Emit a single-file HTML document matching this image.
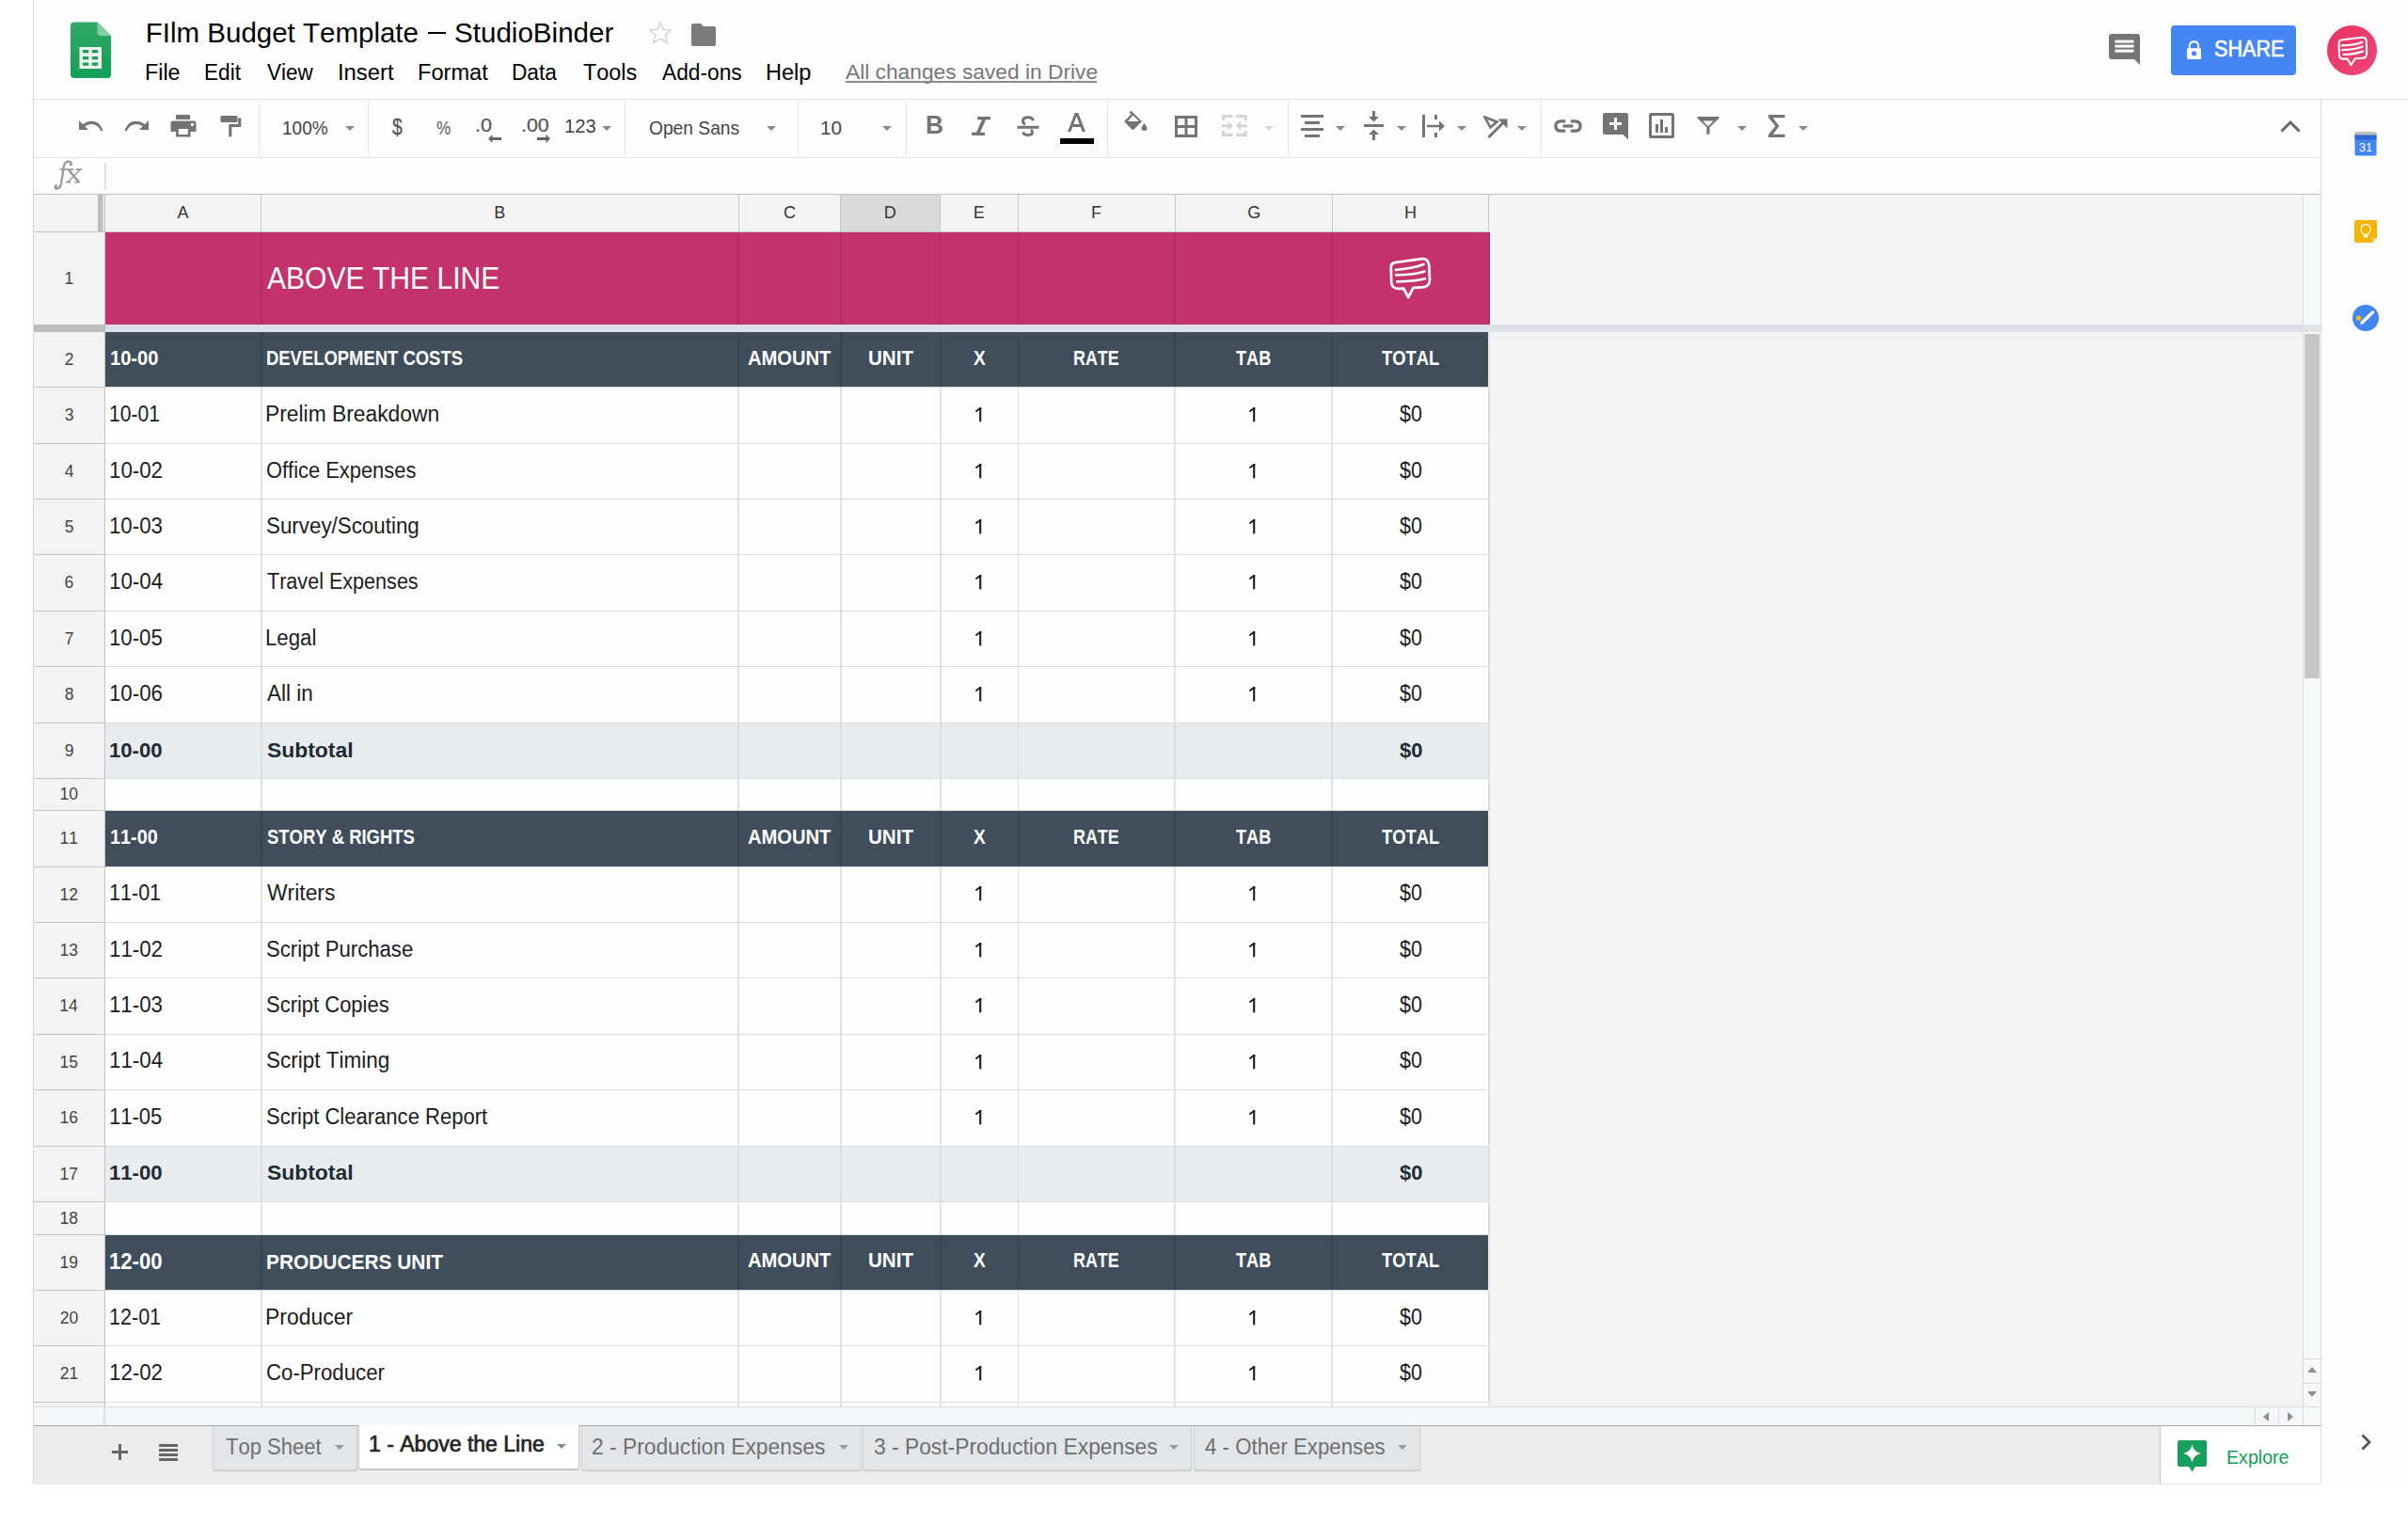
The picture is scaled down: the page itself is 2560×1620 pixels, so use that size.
<!DOCTYPE html>
<html><head><meta charset="utf-8"><title>FIlm Budget Template - StudioBinder</title>
<style>
html,body{margin:0;padding:0;}
body{width:2560px;height:1620px;overflow:hidden;position:relative;background:#fff;font-family:"Liberation Sans",sans-serif;}
.r{position:absolute;display:block;}
.t{position:absolute;white-space:nowrap;line-height:1;transform-origin:0 0;font-kerning:none;}
</style></head><body>
<div class="r" style="left:36px;top:0px;width:2524px;height:105px;background:#fdfdfd;"></div>
<div class="r" style="left:35px;top:0px;width:1px;height:1577px;background:#d6d6d6;"></div>
<div class="r" style="left:36px;top:105px;width:2524px;height:1px;background:#e2e5e3;"></div>
<svg class="r" style="left:74px;top:23px" width="45" height="61" viewBox="0 0 45 61">
<defs><linearGradient id="lg" x1="0" y1="0" x2="0" y2="1"><stop offset="0" stop-color="#34a868"/><stop offset="1" stop-color="#10a057"/></linearGradient></defs>
<path d="M5 0.5 H29.5 L44 15 V56 Q44 60 40 60 H5 Q1 60 1 56 V4.5 Q1 0.5 5 0.5Z" fill="url(#lg)"/>
<path d="M29.5 0.5 L44 15 H33.5 Q29.5 15 29.5 11Z" fill="#87cea4"/>
<rect x="10.5" y="27" width="23.5" height="23" fill="#f1f1f1"/>
<rect x="14" y="30" width="6.2" height="3.3" fill="#16a05c"/><rect x="23.8" y="30" width="6.3" height="3.3" fill="#16a05c"/>
<rect x="14" y="37" width="6.2" height="3.3" fill="#16a05c"/><rect x="23.8" y="37" width="6.3" height="3.3" fill="#16a05c"/>
<rect x="14" y="43.5" width="6.2" height="3.3" fill="#16a05c"/><rect x="23.8" y="43.5" width="6.3" height="3.3" fill="#16a05c"/>
</svg>
<div class="t " style="left:154.78px;top:20.12px;font-size:29.5px;font-weight:normal;color:#000;">FIlm Budget Template</div>
<div class="r" style="left:454.5px;top:33.6px;width:19.5px;height:2.4px;background:#000;"></div>
<div class="t " style="left:482.96px;top:20.12px;font-size:29.5px;font-weight:normal;color:#000;transform:scaleX(1.0025);">StudioBinder</div>
<svg class="r" style="left:688px;top:21px" width="28" height="28" viewBox="0 0 24 24"><path d="M12 2.6l2.8 6.3 6.9.6-5.2 4.6 1.6 6.8L12 17.3l-6.1 3.6 1.6-6.8L2.3 9.5l6.9-.6z" fill="none" stroke="#cfcfcf" stroke-width="1.1"/></svg>
<svg class="r" style="left:735px;top:25px" width="26" height="24" viewBox="0 0 26 24"><path d="M2 0 H10 L13 3 H24 Q26 3 26 5 V22 Q26 24 24 24 H2 Q0 24 0 22 V2 Q0 0 2 0Z" fill="#7b7b7b"/></svg>
<div class="t " style="left:154.19px;top:66.33px;font-size:23px;font-weight:normal;color:#000;transform:scaleX(1.0131);">File</div>
<div class="t " style="left:217.14px;top:66.33px;font-size:23px;font-weight:normal;color:#000;transform:scaleX(0.9846);">Edit</div>
<div class="t " style="left:283.60px;top:66.33px;font-size:23px;font-weight:normal;color:#000;transform:scaleX(0.9778);">View</div>
<div class="t " style="left:358.80px;top:66.33px;font-size:23px;font-weight:normal;color:#000;transform:scaleX(1.0356);">Insert</div>
<div class="t " style="left:443.86px;top:66.33px;font-size:23px;font-weight:normal;color:#000;transform:scaleX(1.0256);">Format</div>
<div class="t " style="left:544.44px;top:66.33px;font-size:23px;font-weight:normal;color:#000;transform:scaleX(0.9851);">Data</div>
<div class="t " style="left:619.67px;top:66.33px;font-size:23px;font-weight:normal;color:#000;transform:scaleX(1.0165);">Tools</div>
<div class="t " style="left:703.76px;top:66.33px;font-size:23px;font-weight:normal;color:#000;transform:scaleX(0.9883);">Add-ons</div>
<div class="t " style="left:813.57px;top:66.33px;font-size:23px;font-weight:normal;color:#000;transform:scaleX(1.0236);">Help</div>
<div class="t " style="left:898.96px;top:65.75px;font-size:22.5px;font-weight:normal;color:#777;transform:scaleX(1.0110);">All changes saved in Drive</div>
<div class="r" style="left:899px;top:86px;width:267px;height:2px;background:#8a8a8a;"></div>
<svg class="r" style="left:2242px;top:36px" width="34" height="33" viewBox="0 0 34 33"><path d="M3 0 H30 Q33 0 33 3 V33 L27 27 H3 Q0 27 0 24 V3 Q0 0 3 0Z" fill="#757575"/>
<rect x="6.5" y="6.6" width="20" height="3" fill="#fff"/><rect x="6.5" y="11.6" width="20" height="3" fill="#fff"/><rect x="6.5" y="16.6" width="20" height="3" fill="#fff"/></svg>
<div class="r" style="left:2308px;top:27px;width:133px;height:53px;background:#4487f2;border-radius:4px"></div>
<svg class="r" style="left:2324px;top:43px" width="17" height="21" viewBox="0 0 17 21"><path d="M3.8 8.5 V6 Q3.8 1.2 8.5 1.2 Q13.2 1.2 13.2 6 V8.5" fill="none" stroke="#fff" stroke-width="1.9"/><rect x="1" y="8.2" width="15" height="11.8" rx="1.3" fill="#fff"/><circle cx="8.5" cy="13.8" r="2.6" fill="#4487f2"/></svg>
<div class="t " style="left:2354.02px;top:40.18px;font-size:24px;font-weight:normal;color:#fff;transform:scaleX(0.8999);-webkit-text-stroke:0.6px #fff">SHARE</div>
<svg class="r" style="left:2474px;top:27px" width="53" height="53" viewBox="0 0 53 53"><defs><linearGradient id="av" x1="0" y1="0" x2="1" y2="1"><stop offset="0" stop-color="#e8335f"/><stop offset="1" stop-color="#f0457a"/></linearGradient></defs><circle cx="26.5" cy="26.5" r="26.5" fill="url(#av)"/>
<path d="M12.6 19.5 Q12 15.6 16.5 15.2 L37 12.8 Q41.6 12.6 41.8 17.2 L42.1 29.6 Q42.2 34.4 37.6 34.7 L29.8 35.2 L25.3 42.2 L21.7 35.6 L17 35.6 Q13 35.6 12.9 31.2Z" fill="none" stroke="#fff" stroke-width="2.1" stroke-linejoin="round"/><path d="M15.8 21.4 Q30 21 37.2 17.8 M16.2 26.2 Q30 25.8 37.6 22.6 M17.4 31 Q30 30.6 38 27.6" fill="none" stroke="#fff" stroke-width="2.2" stroke-linecap="round"/></svg>
<div class="r" style="left:36px;top:106px;width:2431px;height:61px;background:#fdfdfd;"></div>
<div class="r" style="left:36px;top:167px;width:2431px;height:1px;background:#e2e2e2;"></div>
<div class="r" style="left:275px;top:107px;width:1px;height:58px;background:#e3e3e3;"></div>
<div class="r" style="left:391px;top:107px;width:1px;height:58px;background:#e3e3e3;"></div>
<div class="r" style="left:664px;top:107px;width:1px;height:58px;background:#e3e3e3;"></div>
<div class="r" style="left:848px;top:107px;width:1px;height:58px;background:#e3e3e3;"></div>
<div class="r" style="left:963px;top:107px;width:1px;height:58px;background:#e3e3e3;"></div>
<div class="r" style="left:1177px;top:107px;width:1px;height:58px;background:#e3e3e3;"></div>
<div class="r" style="left:1369px;top:107px;width:1px;height:58px;background:#e3e3e3;"></div>
<div class="r" style="left:1638px;top:107px;width:1px;height:58px;background:#e3e3e3;"></div>
<svg class="r" style="left:82px;top:126px" width="28" height="16" viewBox="0 0 28 16"><path d="M2 2 V12 H12 L8.2 8.2 Q12 5.8 16 6 Q22.5 6.5 25.5 13.5 L27.5 12.8 Q24 3 16 2.8 Q10.5 2.8 6 6.2Z" fill="#747474"/></svg>
<svg class="r" style="left:132px;top:126px" width="28" height="16" viewBox="0 0 28 16"><path d="M26 2 V12 H16 L19.8 8.2 Q16 5.8 12 6 Q5.5 6.5 2.5 13.5 L0.5 12.8 Q4 3 12 2.8 Q17.5 2.8 22 6.2Z" fill="#747474"/></svg>
<svg class="r" style="left:181px;top:122px" width="28" height="24" viewBox="0 0 28 24"><rect x="6" y="0" width="15" height="5" fill="#747474"/><path d="M3 6.5 H25 Q27.5 6.5 27.5 9 V18 H21.5 V23.5 H6 V18 H0.5 V9 Q0.5 6.5 3 6.5Z" fill="#747474"/><rect x="8.8" y="15" width="10" height="6" fill="#fdfdfd"/><rect x="22" y="9" width="3" height="3" fill="#fdfdfd"/></svg>
<svg class="r" style="left:234px;top:122px" width="23" height="24" viewBox="0 0 23 24"><rect x="0.5" y="1" width="18" height="7" rx="1.2" fill="#747474"/><path d="M19 3.5 H22.3 V13 H12.3 V23.5 H9.3 V10 H19.3Z" fill="#747474"/></svg>
<div class="t " style="left:299.55px;top:124.72px;font-size:21px;font-weight:normal;color:#444;transform:scaleX(0.9053);">100%</div>
<svg class="r" style="left:367px;top:134px" width="10" height="5" viewBox="0 0 10 5"><path d="M0 0 H10 L5 5Z" fill="#8a8a8a"/></svg>
<div class="t " style="left:417.09px;top:123.28px;font-size:24px;font-weight:normal;color:#555;transform:scaleX(0.8030);-webkit-text-stroke:0.3px #555">$</div>
<div class="t " style="left:464.19px;top:125.02px;font-size:21px;font-weight:normal;color:#555;transform:scaleX(0.8151);">%</div>
<div class="t " style="left:505.03px;top:122.94px;font-size:20.5px;font-weight:normal;color:#555;transform:scaleX(1.0538);-webkit-text-stroke:0.2px #555">.0</div>
<svg class="r" style="left:519px;top:143px" width="14" height="9" viewBox="0 0 14 9"><path d="M0 4.5 L4.5 0 V3 H14 V6 H4.5 V9Z" fill="#666"/></svg>
<div class="t " style="left:553.54px;top:122.94px;font-size:20.5px;font-weight:normal;color:#555;transform:scaleX(1.0455);-webkit-text-stroke:0.2px #555">.00</div>
<svg class="r" style="left:571px;top:143px" width="14" height="9" viewBox="0 0 14 9"><path d="M14 4.5 L9.5 0 V3 H0 V6 H9.5 V9Z" fill="#666"/></svg>
<div class="t " style="left:600.46px;top:123.84px;font-size:20.5px;font-weight:normal;color:#444;transform:scaleX(0.9861);">123</div>
<svg class="r" style="left:640px;top:134px" width="10" height="5" viewBox="0 0 10 5"><path d="M0 0 H10 L5 5Z" fill="#8a8a8a"/></svg>
<div class="t " style="left:690.09px;top:124.72px;font-size:21px;font-weight:normal;color:#444;transform:scaleX(0.9146);">Open Sans</div>
<svg class="r" style="left:815px;top:134px" width="10" height="5" viewBox="0 0 10 5"><path d="M0 0 H10 L5 5Z" fill="#8a8a8a"/></svg>
<div class="t " style="left:871.83px;top:124.72px;font-size:21px;font-weight:normal;color:#444;transform:scaleX(0.9838);">10</div>
<svg class="r" style="left:938px;top:134px" width="10" height="5" viewBox="0 0 10 5"><path d="M0 0 H10 L5 5Z" fill="#8a8a8a"/></svg>
<div class="t " style="left:983.84px;top:120.44px;font-size:27px;font-weight:bold;color:#747474;transform:scaleX(0.9717);">B</div>
<svg class="r" style="left:1033px;top:124px" width="21" height="20" viewBox="0 0 21 20"><path d="M6 0 H20 V3.2 H15 L9 16.8 H14 V20 H0 V16.8 H5 L11 3.2 H6Z" fill="#747474"/></svg>
<svg class="r" style="left:1081px;top:123px" width="24" height="24" viewBox="0 0 24 24"><path d="M17.5 5.2 Q16.3 1.8 11.8 1.8 Q6.5 1.8 6.5 5.8 Q6.5 8 9 9.2" fill="none" stroke="#747474" stroke-width="3"/><rect x="0.5" y="10.8" width="23" height="3" fill="#747474"/><path d="M15 15 Q16.5 16 16.5 17.5 Q16.5 20.5 12 20.5 Q7.5 20.5 6.5 17.5" fill="none" stroke="#747474" stroke-width="3"/></svg>
<svg class="r" style="left:1135px;top:120px" width="19" height="21" viewBox="0 0 19 21"><path d="M7.7 0 H11.3 L19 20 H15.6 L13.8 15 H5.2 L3.4 20 H0Z M6.3 12 H12.7 L9.5 3.5Z" fill="#747474"/></svg>
<div class="r" style="left:1127px;top:147px;width:36px;height:6px;background:#000;"></div>
<svg class="r" style="left:1195px;top:118px" width="25" height="22" viewBox="0 0 25 22"><path d="M6 0.5 L8 0 L10.2 2.5 L19 11 L10.5 19.5 Q9.5 20.5 8.5 19.5 L1 12 Q0 11 1 10 L7.8 3.3 L5.5 1.2Z M4 11 H16 L9.5 4.5Z" fill="#747474" fill-rule="evenodd"/><path d="M21.5 13 Q24.5 17 24.5 18.5 Q24.5 21 21.5 21 Q18.5 21 18.5 18.5 Q18.5 17 21.5 13Z" fill="#747474"/></svg>
<svg class="r" style="left:1249px;top:123px" width="24" height="23" viewBox="0 0 24 23"><path d="M0 0 H24 V23 H0Z M3 3 V10 H10.5 V3Z M13.5 3 V10 H21 V3Z M3 13 V20 H10.5 V13Z M13.5 13 V20 H21 V13Z" fill="#747474" fill-rule="evenodd"/></svg>
<svg class="r" style="left:1299px;top:122px" width="28" height="24" viewBox="0 0 28 24"><path d="M0 0 H11.6 V3.2 H3.2 V6 H0Z M15.1 0 H26.7 V6 H23.5 V3.2 H15.1Z M0 17 H3.2 V19.8 H11.6 V23 H0Z M23.5 17 H26.7 V23 H15.1 V19.8 H23.5Z" fill="#d5d5d5"/><path d="M0 10.3 H6.8 V7 L11.8 11.8 L6.8 16.6 V13.3 H0Z M26.7 10.3 H19.9 V7 L14.9 11.8 L19.9 16.6 V13.3 H26.7Z" fill="#d5d5d5"/></svg>
<svg class="r" style="left:1344px;top:134px" width="10" height="5" viewBox="0 0 10 5"><path d="M0 0 H10 L5 5Z" fill="#dadada"/></svg>
<svg class="r" style="left:1383px;top:122px" width="24" height="24" viewBox="0 0 24 24"><rect x="0" y="0" width="24" height="3" fill="#747474"/><rect x="4" y="7" width="16" height="3" fill="#747474"/><rect x="0" y="14" width="24" height="3" fill="#747474"/><rect x="4" y="21" width="16" height="3" fill="#747474"/></svg>
<svg class="r" style="left:1420px;top:134px" width="10" height="5" viewBox="0 0 10 5"><path d="M0 0 H10 L5 5Z" fill="#8a8a8a"/></svg>
<svg class="r" style="left:1450px;top:118px" width="21" height="31" viewBox="0 0 21 31"><path d="M9 0 H12 V6 H16 L10.5 11.5 L5 6 H9Z" fill="#747474"/><rect x="0" y="14" width="21" height="3" fill="#747474"/><path d="M9 31 H12 V25 H16 L10.5 19.5 L5 25 H9Z" fill="#747474"/></svg>
<svg class="r" style="left:1485px;top:134px" width="10" height="5" viewBox="0 0 10 5"><path d="M0 0 H10 L5 5Z" fill="#8a8a8a"/></svg>
<svg class="r" style="left:1512px;top:122px" width="24" height="24" viewBox="0 0 24 24"><rect x="0" y="0" width="3" height="24" fill="#747474"/><rect x="13" y="0" width="3" height="5" fill="#747474"/><rect x="13" y="19" width="3" height="5" fill="#747474"/><path d="M5 10.8 H18 V6.5 L24 12 L18 17.5 V13.2 H5Z" fill="#747474"/></svg>
<svg class="r" style="left:1549px;top:134px" width="10" height="5" viewBox="0 0 10 5"><path d="M0 0 H10 L5 5Z" fill="#8a8a8a"/></svg>
<svg class="r" style="left:1577px;top:123px" width="26" height="24" viewBox="0 0 26 24"><path d="M1.5 1.5 L14.5 6.5 L7.5 12.5Z" fill="none" stroke="#747474" stroke-width="2.6"/><path d="M5.5 23 L22 6.5" stroke="#747474" stroke-width="3"/><path d="M15.5 3.5 H25.5 V13.5Z" fill="#747474"/></svg>
<svg class="r" style="left:1613px;top:134px" width="10" height="5" viewBox="0 0 10 5"><path d="M0 0 H10 L5 5Z" fill="#8a8a8a"/></svg>
<svg class="r" style="left:1652px;top:126px" width="30" height="16" viewBox="0 0 30 16"><path d="M12.2 2.8 H7.5 Q1.9 2.8 1.9 8 Q1.9 13.2 7.5 13.2 H12.2 M17.8 2.8 H22.5 Q28.1 2.8 28.1 8 Q28.1 13.2 22.5 13.2 H17.8" fill="none" stroke="#747474" stroke-width="3.3"/><path d="M9.6 8 H20.4" stroke="#747474" stroke-width="3.2"/></svg>
<svg class="r" style="left:1704px;top:120px" width="27" height="29" viewBox="0 0 27 29"><path d="M2 0 H25 Q27 0 27 2 V28.5 L21.5 23 H2 Q0 23 0 21 V2 Q0 0 2 0Z M12 5 V10 H7 V13 H12 V18 H15 V13 H20 V10 H15 V5Z" fill="#747474" fill-rule="evenodd"/></svg>
<svg class="r" style="left:1753px;top:120px" width="27" height="27" viewBox="0 0 27 27"><path d="M2 0 H25 Q27 0 27 2 V25 Q27 27 25 27 H2 Q0 27 0 25 V2 Q0 0 2 0Z M3 3 V24 H24 V3Z" fill="#747474" fill-rule="evenodd"/><rect x="7" y="12" width="3" height="9" fill="#747474"/><rect x="12" y="7" width="3" height="14" fill="#747474"/><rect x="17" y="15" width="3" height="6" fill="#747474"/></svg>
<svg class="r" style="left:1804px;top:124px" width="24" height="20" viewBox="0 0 24 20"><path d="M0.5 0 H23.5 V1.8 L13.6 11.2 V18 L10.4 19.6 V11.2 L0.5 1.8Z M6.2 4.6 H17.6 L11.9 10.2Z" fill="#747474" fill-rule="evenodd"/></svg>
<svg class="r" style="left:1847px;top:134px" width="10" height="5" viewBox="0 0 10 5"><path d="M0 0 H10 L5 5Z" fill="#8a8a8a"/></svg>
<svg class="r" style="left:1880px;top:122px" width="18" height="24" viewBox="0 0 18 24"><path d="M0 0 H17.5 V3.2 H4.8 L11.5 12 L4.8 20.8 H17.5 V24 H0 V21.3 L7.5 12 L0 2.7Z" fill="#747474"/></svg>
<svg class="r" style="left:1912px;top:134px" width="10" height="5" viewBox="0 0 10 5"><path d="M0 0 H10 L5 5Z" fill="#8a8a8a"/></svg>
<svg class="r" style="left:2424px;top:127px" width="22" height="14" viewBox="0 0 22 14"><path d="M1.5 12.5 L11 3 L20.5 12.5" fill="none" stroke="#666" stroke-width="3"/></svg>
<div class="r" style="left:36px;top:168px;width:2431px;height:38px;background:#fdfdfd;"></div>
<svg class="r" style="left:50px;top:165px" width="45" height="40" viewBox="0 0 45 40"><g transform="translate(-50,-165)" fill="none" stroke="#999" stroke-linecap="butt"><path d="M76.2 173.6 Q75 171.2 72 171.6 Q68.4 172.3 67.6 178 L65.2 194.5 Q64.3 200.3 60.4 200.5 Q58.4 200.5 58.3 198.6" stroke-width="2.3"/><circle cx="75.3" cy="174.6" r="1.7" fill="#999" stroke="none"/><circle cx="59.6" cy="197.8" r="1.7" fill="#999" stroke="none"/><path d="M63.6 180.2 H78.2 M80.6 180.2 H87 M70 193.6 H75.2 M79.2 193.6 H85" stroke-width="1.7"/><path d="M73 180.5 L83.6 193.2" stroke-width="2.5"/><path d="M85 180.5 L72.4 193.2" stroke-width="1.3"/></g></svg>
<div class="r" style="left:111px;top:173px;width:2px;height:28px;background:#e0e0e0;"></div>
<div class="r" style="left:36px;top:206px;width:2431px;height:1px;background:#c4c4c4;"></div>
<div class="r" style="left:36px;top:207px;width:2412px;height:1289px;background:#f3f3f3;"></div>
<div class="r" style="left:36px;top:207px;width:2412px;height:39px;background:#f3f3f3;"></div>
<div class="r" style="left:894px;top:207px;width:105px;height:39px;background:#dadada;"></div>
<div class="r" style="left:277px;top:207px;width:1px;height:39px;background:#c7c7c7;"></div>
<div class="r" style="left:785px;top:207px;width:1px;height:39px;background:#c7c7c7;"></div>
<div class="r" style="left:893px;top:207px;width:1px;height:39px;background:#c7c7c7;"></div>
<div class="r" style="left:999px;top:207px;width:1px;height:39px;background:#c7c7c7;"></div>
<div class="r" style="left:1082px;top:207px;width:1px;height:39px;background:#c7c7c7;"></div>
<div class="r" style="left:1249px;top:207px;width:1px;height:39px;background:#c7c7c7;"></div>
<div class="r" style="left:1416px;top:207px;width:1px;height:39px;background:#c7c7c7;"></div>
<div class="r" style="left:1582px;top:207px;width:1px;height:39px;background:#c7c7c7;"></div>
<div class="r" style="left:36px;top:246px;width:1547px;height:1px;background:#c4c4c4;"></div>
<div class="r" style="left:104px;top:207px;width:5px;height:39px;background:#bdbdbd;"></div>
<div class="r" style="left:109px;top:207px;width:2px;height:39px;background:#dde1e6;"></div>
<div class="r" style="left:111px;top:207px;width:1px;height:39px;background:#c7c7c7;"></div>
<div class="t " style="left:188.50px;top:216.76px;font-size:18px;font-weight:normal;color:#333;">A</div>
<div class="t " style="left:525.23px;top:216.76px;font-size:18px;font-weight:normal;color:#333;">B</div>
<div class="t " style="left:832.89px;top:216.76px;font-size:18px;font-weight:normal;color:#333;">C</div>
<div class="t " style="left:939.69px;top:216.76px;font-size:18px;font-weight:normal;color:#333;">D</div>
<div class="t " style="left:1034.65px;top:216.76px;font-size:18px;font-weight:normal;color:#333;">E</div>
<div class="t " style="left:1160.12px;top:216.76px;font-size:18px;font-weight:normal;color:#333;">F</div>
<div class="t " style="left:1326.22px;top:216.76px;font-size:18px;font-weight:normal;color:#333;">G</div>
<div class="t " style="left:1493.00px;top:216.76px;font-size:18px;font-weight:normal;color:#333;">H</div>
<div class="r" style="left:36px;top:247px;width:75px;height:1248px;background:#f3f3f3;"></div>
<div class="r" style="left:111px;top:247px;width:2px;height:1249px;background:#c4c4c4;"></div>
<div class="r" style="left:36px;top:345px;width:76px;height:8px;background:#bdbdbd;"></div>
<div class="r" style="left:112px;top:345px;width:2336px;height:8px;background:#dce0e8;"></div>
<div class="r" style="left:2448px;top:345px;width:19px;height:8px;background:#e3e6ec;"></div>
<div class="r" style="left:113px;top:353px;width:1470px;height:1142px;background:#fefefe;"></div>
<div class="r" style="left:112px;top:247px;width:1471px;height:98px;background:#c3326c;"></div>
<div class="r" style="left:277px;top:247px;width:2px;height:98px;background:#ae2d62;"></div>
<div class="r" style="left:784px;top:247px;width:2px;height:98px;background:#ae2d62;"></div>
<div class="r" style="left:893px;top:247px;width:2px;height:98px;background:#ae2d62;"></div>
<div class="r" style="left:999px;top:247px;width:2px;height:98px;background:#ae2d62;"></div>
<div class="r" style="left:1082px;top:247px;width:1px;height:98px;background:#ae2d62;"></div>
<div class="r" style="left:1248px;top:247px;width:2px;height:98px;background:#ae2d62;"></div>
<div class="r" style="left:1415px;top:247px;width:2px;height:98px;background:#ae2d62;"></div>
<div class="r" style="left:1582px;top:247px;width:2px;height:98px;background:#ae2d62;"></div>
<div class="r" style="left:36px;top:247px;width:75px;height:98px;background:#f3f3f3;"></div>
<div class="r" style="left:112px;top:353px;width:1471px;height:58px;background:#404e5c;"></div>
<div class="r" style="left:277px;top:353px;width:2px;height:58px;background:#37444f;"></div>
<div class="r" style="left:784px;top:353px;width:2px;height:58px;background:#37444f;"></div>
<div class="r" style="left:893px;top:353px;width:2px;height:58px;background:#37444f;"></div>
<div class="r" style="left:999px;top:353px;width:2px;height:58px;background:#37444f;"></div>
<div class="r" style="left:1082px;top:353px;width:1px;height:58px;background:#37444f;"></div>
<div class="r" style="left:1248px;top:353px;width:2px;height:58px;background:#37444f;"></div>
<div class="r" style="left:1415px;top:353px;width:2px;height:58px;background:#37444f;"></div>
<div class="r" style="left:1582px;top:353px;width:2px;height:58px;background:#e3e6ea;"></div>
<div class="r" style="left:112px;top:411px;width:1471px;height:1px;background:#d5d9dd;"></div>
<div class="r" style="left:36px;top:411px;width:75px;height:1px;background:#c4c4c4;"></div>
<div class="t " style="left:68.63px;top:373.68px;font-size:17.5px;font-weight:normal;color:#444;">2</div>
<div class="t " style="left:116.53px;top:370.60px;font-size:21.5px;font-weight:bold;color:#fff;transform:scaleX(0.9345);">10-00</div>
<div class="t " style="left:283.07px;top:370.60px;font-size:21.5px;font-weight:bold;color:#fff;transform:scaleX(0.8575);">DEVELOPMENT COSTS</div>
<div class="t " style="left:794.80px;top:370.60px;font-size:21.5px;font-weight:bold;color:#fff;transform:scaleX(0.9372);">AMOUNT</div>
<div class="t " style="left:923.27px;top:370.60px;font-size:21.5px;font-weight:bold;color:#fff;transform:scaleX(0.9561);">UNIT</div>
<div class="t " style="left:1034.83px;top:370.60px;font-size:21.5px;font-weight:bold;color:#fff;transform:scaleX(0.8881);">X</div>
<div class="t " style="left:1141.30px;top:370.60px;font-size:21.5px;font-weight:bold;color:#fff;transform:scaleX(0.8320);">RATE</div>
<div class="t " style="left:1314.20px;top:370.60px;font-size:21.5px;font-weight:bold;color:#fff;transform:scaleX(0.8425);">TAB</div>
<div class="t " style="left:1468.69px;top:370.60px;font-size:21.5px;font-weight:bold;color:#fff;transform:scaleX(0.8566);">TOTAL</div>
<div class="r" style="left:112px;top:412px;width:1471px;height:59px;background:#fefefe;"></div>
<div class="r" style="left:277px;top:412px;width:2px;height:59px;background:#e1e2e2;"></div>
<div class="r" style="left:784px;top:412px;width:2px;height:59px;background:#e1e2e2;"></div>
<div class="r" style="left:893px;top:412px;width:2px;height:59px;background:#e1e2e2;"></div>
<div class="r" style="left:999px;top:412px;width:2px;height:59px;background:#e1e2e2;"></div>
<div class="r" style="left:1082px;top:412px;width:1px;height:59px;background:#e1e2e2;"></div>
<div class="r" style="left:1248px;top:412px;width:2px;height:59px;background:#e1e2e2;"></div>
<div class="r" style="left:1415px;top:412px;width:2px;height:59px;background:#e1e2e2;"></div>
<div class="r" style="left:1582px;top:412px;width:2px;height:59px;background:#dcdddd;"></div>
<div class="r" style="left:112px;top:471px;width:1471px;height:1px;background:#d9dee2;"></div>
<div class="r" style="left:36px;top:471px;width:75px;height:1px;background:#c4c4c4;"></div>
<div class="t " style="left:68.68px;top:433.18px;font-size:17.5px;font-weight:normal;color:#444;">3</div>
<div class="t " style="left:116.20px;top:429.13px;font-size:23px;font-weight:normal;color:#1c1c1c;transform:scaleX(0.9151);">10-01</div>
<div class="t " style="left:282.43px;top:429.13px;font-size:23px;font-weight:normal;color:#1c1c1c;transform:scaleX(0.9921);">Prelim Breakdown</div>
<svg class="r" style="left:1036.5px;top:432.2px" width="8" height="17" viewBox="0 0 8 17"><path d="M5.2 1.3 V16.4" stroke="#1c1c1c" stroke-width="2.1" fill="none"/><path d="M5.0 1.9 L1.0 4.9" stroke="#1c1c1c" stroke-width="1.9" fill="none" stroke-linecap="round"/><path d="M4.15 1.2 H6.25 V3 H4.15Z" fill="#1c1c1c"/></svg>
<svg class="r" style="left:1328.3px;top:432.2px" width="8" height="17" viewBox="0 0 8 17"><path d="M5.2 1.3 V16.4" stroke="#1c1c1c" stroke-width="2.1" fill="none"/><path d="M5.0 1.9 L1.0 4.9" stroke="#1c1c1c" stroke-width="1.9" fill="none" stroke-linecap="round"/><path d="M4.15 1.2 H6.25 V3 H4.15Z" fill="#1c1c1c"/></svg>
<div class="t " style="left:1487.87px;top:429.13px;font-size:23px;font-weight:normal;color:#1c1c1c;transform:scaleX(0.9330);">$0</div>
<div class="r" style="left:112px;top:472px;width:1471px;height:58px;background:#fefefe;"></div>
<div class="r" style="left:277px;top:472px;width:2px;height:58px;background:#e1e2e2;"></div>
<div class="r" style="left:784px;top:472px;width:2px;height:58px;background:#e1e2e2;"></div>
<div class="r" style="left:893px;top:472px;width:2px;height:58px;background:#e1e2e2;"></div>
<div class="r" style="left:999px;top:472px;width:2px;height:58px;background:#e1e2e2;"></div>
<div class="r" style="left:1082px;top:472px;width:1px;height:58px;background:#e1e2e2;"></div>
<div class="r" style="left:1248px;top:472px;width:2px;height:58px;background:#e1e2e2;"></div>
<div class="r" style="left:1415px;top:472px;width:2px;height:58px;background:#e1e2e2;"></div>
<div class="r" style="left:1582px;top:472px;width:2px;height:58px;background:#dcdddd;"></div>
<div class="r" style="left:112px;top:530px;width:1471px;height:1px;background:#d9dee2;"></div>
<div class="r" style="left:36px;top:530px;width:75px;height:1px;background:#c4c4c4;"></div>
<div class="t " style="left:68.69px;top:492.68px;font-size:17.5px;font-weight:normal;color:#444;">4</div>
<div class="t " style="left:116.10px;top:488.83px;font-size:23px;font-weight:normal;color:#1c1c1c;transform:scaleX(0.9693);">10-02</div>
<div class="t " style="left:283.26px;top:488.83px;font-size:23px;font-weight:normal;color:#1c1c1c;transform:scaleX(0.9514);">Office Expenses</div>
<svg class="r" style="left:1036.5px;top:491.9px" width="8" height="17" viewBox="0 0 8 17"><path d="M5.2 1.3 V16.4" stroke="#1c1c1c" stroke-width="2.1" fill="none"/><path d="M5.0 1.9 L1.0 4.9" stroke="#1c1c1c" stroke-width="1.9" fill="none" stroke-linecap="round"/><path d="M4.15 1.2 H6.25 V3 H4.15Z" fill="#1c1c1c"/></svg>
<svg class="r" style="left:1328.3px;top:491.9px" width="8" height="17" viewBox="0 0 8 17"><path d="M5.2 1.3 V16.4" stroke="#1c1c1c" stroke-width="2.1" fill="none"/><path d="M5.0 1.9 L1.0 4.9" stroke="#1c1c1c" stroke-width="1.9" fill="none" stroke-linecap="round"/><path d="M4.15 1.2 H6.25 V3 H4.15Z" fill="#1c1c1c"/></svg>
<div class="t " style="left:1487.87px;top:488.83px;font-size:23px;font-weight:normal;color:#1c1c1c;transform:scaleX(0.9330);">$0</div>
<div class="r" style="left:112px;top:531px;width:1471px;height:58px;background:#fefefe;"></div>
<div class="r" style="left:277px;top:531px;width:2px;height:58px;background:#e1e2e2;"></div>
<div class="r" style="left:784px;top:531px;width:2px;height:58px;background:#e1e2e2;"></div>
<div class="r" style="left:893px;top:531px;width:2px;height:58px;background:#e1e2e2;"></div>
<div class="r" style="left:999px;top:531px;width:2px;height:58px;background:#e1e2e2;"></div>
<div class="r" style="left:1082px;top:531px;width:1px;height:58px;background:#e1e2e2;"></div>
<div class="r" style="left:1248px;top:531px;width:2px;height:58px;background:#e1e2e2;"></div>
<div class="r" style="left:1415px;top:531px;width:2px;height:58px;background:#e1e2e2;"></div>
<div class="r" style="left:1582px;top:531px;width:2px;height:58px;background:#dcdddd;"></div>
<div class="r" style="left:112px;top:589px;width:1471px;height:1px;background:#d9dee2;"></div>
<div class="r" style="left:36px;top:589px;width:75px;height:1px;background:#c4c4c4;"></div>
<div class="t " style="left:68.65px;top:551.68px;font-size:17.5px;font-weight:normal;color:#444;">5</div>
<div class="t " style="left:116.11px;top:548.13px;font-size:23px;font-weight:normal;color:#1c1c1c;transform:scaleX(0.9668);">10-03</div>
<div class="t " style="left:283.29px;top:548.13px;font-size:23px;font-weight:normal;color:#1c1c1c;transform:scaleX(0.9718);">Survey/Scouting</div>
<svg class="r" style="left:1036.5px;top:551.2px" width="8" height="17" viewBox="0 0 8 17"><path d="M5.2 1.3 V16.4" stroke="#1c1c1c" stroke-width="2.1" fill="none"/><path d="M5.0 1.9 L1.0 4.9" stroke="#1c1c1c" stroke-width="1.9" fill="none" stroke-linecap="round"/><path d="M4.15 1.2 H6.25 V3 H4.15Z" fill="#1c1c1c"/></svg>
<svg class="r" style="left:1328.3px;top:551.2px" width="8" height="17" viewBox="0 0 8 17"><path d="M5.2 1.3 V16.4" stroke="#1c1c1c" stroke-width="2.1" fill="none"/><path d="M5.0 1.9 L1.0 4.9" stroke="#1c1c1c" stroke-width="1.9" fill="none" stroke-linecap="round"/><path d="M4.15 1.2 H6.25 V3 H4.15Z" fill="#1c1c1c"/></svg>
<div class="t " style="left:1487.87px;top:548.13px;font-size:23px;font-weight:normal;color:#1c1c1c;transform:scaleX(0.9330);">$0</div>
<div class="r" style="left:112px;top:590px;width:1471px;height:59px;background:#fefefe;"></div>
<div class="r" style="left:277px;top:590px;width:2px;height:59px;background:#e1e2e2;"></div>
<div class="r" style="left:784px;top:590px;width:2px;height:59px;background:#e1e2e2;"></div>
<div class="r" style="left:893px;top:590px;width:2px;height:59px;background:#e1e2e2;"></div>
<div class="r" style="left:999px;top:590px;width:2px;height:59px;background:#e1e2e2;"></div>
<div class="r" style="left:1082px;top:590px;width:1px;height:59px;background:#e1e2e2;"></div>
<div class="r" style="left:1248px;top:590px;width:2px;height:59px;background:#e1e2e2;"></div>
<div class="r" style="left:1415px;top:590px;width:2px;height:59px;background:#e1e2e2;"></div>
<div class="r" style="left:1582px;top:590px;width:2px;height:59px;background:#dcdddd;"></div>
<div class="r" style="left:112px;top:649px;width:1471px;height:1px;background:#d9dee2;"></div>
<div class="r" style="left:36px;top:649px;width:75px;height:1px;background:#c4c4c4;"></div>
<div class="t " style="left:68.57px;top:611.18px;font-size:17.5px;font-weight:normal;color:#444;">6</div>
<div class="t " style="left:116.10px;top:607.33px;font-size:23px;font-weight:normal;color:#1c1c1c;transform:scaleX(0.9716);">10-04</div>
<div class="t " style="left:283.82px;top:607.33px;font-size:23px;font-weight:normal;color:#1c1c1c;transform:scaleX(0.9379);">Travel Expenses</div>
<svg class="r" style="left:1036.5px;top:610.4px" width="8" height="17" viewBox="0 0 8 17"><path d="M5.2 1.3 V16.4" stroke="#1c1c1c" stroke-width="2.1" fill="none"/><path d="M5.0 1.9 L1.0 4.9" stroke="#1c1c1c" stroke-width="1.9" fill="none" stroke-linecap="round"/><path d="M4.15 1.2 H6.25 V3 H4.15Z" fill="#1c1c1c"/></svg>
<svg class="r" style="left:1328.3px;top:610.4px" width="8" height="17" viewBox="0 0 8 17"><path d="M5.2 1.3 V16.4" stroke="#1c1c1c" stroke-width="2.1" fill="none"/><path d="M5.0 1.9 L1.0 4.9" stroke="#1c1c1c" stroke-width="1.9" fill="none" stroke-linecap="round"/><path d="M4.15 1.2 H6.25 V3 H4.15Z" fill="#1c1c1c"/></svg>
<div class="t " style="left:1487.87px;top:607.33px;font-size:23px;font-weight:normal;color:#1c1c1c;transform:scaleX(0.9330);">$0</div>
<div class="r" style="left:112px;top:650px;width:1471px;height:58px;background:#fefefe;"></div>
<div class="r" style="left:277px;top:650px;width:2px;height:58px;background:#e1e2e2;"></div>
<div class="r" style="left:784px;top:650px;width:2px;height:58px;background:#e1e2e2;"></div>
<div class="r" style="left:893px;top:650px;width:2px;height:58px;background:#e1e2e2;"></div>
<div class="r" style="left:999px;top:650px;width:2px;height:58px;background:#e1e2e2;"></div>
<div class="r" style="left:1082px;top:650px;width:1px;height:58px;background:#e1e2e2;"></div>
<div class="r" style="left:1248px;top:650px;width:2px;height:58px;background:#e1e2e2;"></div>
<div class="r" style="left:1415px;top:650px;width:2px;height:58px;background:#e1e2e2;"></div>
<div class="r" style="left:1582px;top:650px;width:2px;height:58px;background:#dcdddd;"></div>
<div class="r" style="left:112px;top:708px;width:1471px;height:1px;background:#d9dee2;"></div>
<div class="r" style="left:36px;top:708px;width:75px;height:1px;background:#c4c4c4;"></div>
<div class="t " style="left:68.63px;top:670.68px;font-size:17.5px;font-weight:normal;color:#444;">7</div>
<div class="t " style="left:116.11px;top:666.73px;font-size:23px;font-weight:normal;color:#1c1c1c;transform:scaleX(0.9660);">10-05</div>
<div class="t " style="left:282.48px;top:666.73px;font-size:23px;font-weight:normal;color:#1c1c1c;transform:scaleX(0.9650);">Legal</div>
<svg class="r" style="left:1036.5px;top:669.8px" width="8" height="17" viewBox="0 0 8 17"><path d="M5.2 1.3 V16.4" stroke="#1c1c1c" stroke-width="2.1" fill="none"/><path d="M5.0 1.9 L1.0 4.9" stroke="#1c1c1c" stroke-width="1.9" fill="none" stroke-linecap="round"/><path d="M4.15 1.2 H6.25 V3 H4.15Z" fill="#1c1c1c"/></svg>
<svg class="r" style="left:1328.3px;top:669.8px" width="8" height="17" viewBox="0 0 8 17"><path d="M5.2 1.3 V16.4" stroke="#1c1c1c" stroke-width="2.1" fill="none"/><path d="M5.0 1.9 L1.0 4.9" stroke="#1c1c1c" stroke-width="1.9" fill="none" stroke-linecap="round"/><path d="M4.15 1.2 H6.25 V3 H4.15Z" fill="#1c1c1c"/></svg>
<div class="t " style="left:1487.87px;top:666.73px;font-size:23px;font-weight:normal;color:#1c1c1c;transform:scaleX(0.9330);">$0</div>
<div class="r" style="left:112px;top:709px;width:1471px;height:59px;background:#fefefe;"></div>
<div class="r" style="left:277px;top:709px;width:2px;height:59px;background:#e1e2e2;"></div>
<div class="r" style="left:784px;top:709px;width:2px;height:59px;background:#e1e2e2;"></div>
<div class="r" style="left:893px;top:709px;width:2px;height:59px;background:#e1e2e2;"></div>
<div class="r" style="left:999px;top:709px;width:2px;height:59px;background:#e1e2e2;"></div>
<div class="r" style="left:1082px;top:709px;width:1px;height:59px;background:#e1e2e2;"></div>
<div class="r" style="left:1248px;top:709px;width:2px;height:59px;background:#e1e2e2;"></div>
<div class="r" style="left:1415px;top:709px;width:2px;height:59px;background:#e1e2e2;"></div>
<div class="r" style="left:1582px;top:709px;width:2px;height:59px;background:#dcdddd;"></div>
<div class="r" style="left:112px;top:768px;width:1471px;height:1px;background:#d9dee2;"></div>
<div class="r" style="left:36px;top:768px;width:75px;height:1px;background:#c4c4c4;"></div>
<div class="t " style="left:68.63px;top:730.18px;font-size:17.5px;font-weight:normal;color:#444;">8</div>
<div class="t " style="left:116.11px;top:725.93px;font-size:23px;font-weight:normal;color:#1c1c1c;transform:scaleX(0.9668);">10-06</div>
<div class="t " style="left:284.26px;top:725.93px;font-size:23px;font-weight:normal;color:#1c1c1c;transform:scaleX(0.9790);">All in</div>
<svg class="r" style="left:1036.5px;top:729.0px" width="8" height="17" viewBox="0 0 8 17"><path d="M5.2 1.3 V16.4" stroke="#1c1c1c" stroke-width="2.1" fill="none"/><path d="M5.0 1.9 L1.0 4.9" stroke="#1c1c1c" stroke-width="1.9" fill="none" stroke-linecap="round"/><path d="M4.15 1.2 H6.25 V3 H4.15Z" fill="#1c1c1c"/></svg>
<svg class="r" style="left:1328.3px;top:729.0px" width="8" height="17" viewBox="0 0 8 17"><path d="M5.2 1.3 V16.4" stroke="#1c1c1c" stroke-width="2.1" fill="none"/><path d="M5.0 1.9 L1.0 4.9" stroke="#1c1c1c" stroke-width="1.9" fill="none" stroke-linecap="round"/><path d="M4.15 1.2 H6.25 V3 H4.15Z" fill="#1c1c1c"/></svg>
<div class="t " style="left:1487.87px;top:725.93px;font-size:23px;font-weight:normal;color:#1c1c1c;transform:scaleX(0.9330);">$0</div>
<div class="r" style="left:112px;top:769px;width:1471px;height:58px;background:#e9ecef;"></div>
<div class="r" style="left:277px;top:769px;width:2px;height:58px;background:#d9dde1;"></div>
<div class="r" style="left:784px;top:769px;width:2px;height:58px;background:#d9dde1;"></div>
<div class="r" style="left:893px;top:769px;width:2px;height:58px;background:#d9dde1;"></div>
<div class="r" style="left:999px;top:769px;width:2px;height:58px;background:#d9dde1;"></div>
<div class="r" style="left:1082px;top:769px;width:1px;height:58px;background:#d9dde1;"></div>
<div class="r" style="left:1248px;top:769px;width:2px;height:58px;background:#d9dde1;"></div>
<div class="r" style="left:1415px;top:769px;width:2px;height:58px;background:#d9dde1;"></div>
<div class="r" style="left:1582px;top:769px;width:2px;height:58px;background:#d9dde1;"></div>
<div class="r" style="left:112px;top:827px;width:1471px;height:1px;background:#d9dee2;"></div>
<div class="r" style="left:36px;top:827px;width:75px;height:1px;background:#c4c4c4;"></div>
<div class="t " style="left:68.64px;top:789.68px;font-size:17.5px;font-weight:normal;color:#444;">9</div>
<div class="t " style="left:116.41px;top:785.58px;font-size:22.7px;font-weight:bold;color:#222a33;transform:scaleX(0.9749);">10-00</div>
<div class="t " style="left:283.64px;top:785.58px;font-size:22.7px;font-weight:bold;color:#222a33;transform:scaleX(1.0087);">Subtotal</div>
<div class="t " style="left:1487.56px;top:785.58px;font-size:22.7px;font-weight:bold;color:#222a33;transform:scaleX(0.9701);">$0</div>
<div class="r" style="left:112px;top:828px;width:1471px;height:33px;background:#fefefe;"></div>
<div class="r" style="left:277px;top:828px;width:2px;height:33px;background:#e1e2e2;"></div>
<div class="r" style="left:784px;top:828px;width:2px;height:33px;background:#e1e2e2;"></div>
<div class="r" style="left:893px;top:828px;width:2px;height:33px;background:#e1e2e2;"></div>
<div class="r" style="left:999px;top:828px;width:2px;height:33px;background:#e1e2e2;"></div>
<div class="r" style="left:1082px;top:828px;width:1px;height:33px;background:#e1e2e2;"></div>
<div class="r" style="left:1248px;top:828px;width:2px;height:33px;background:#e1e2e2;"></div>
<div class="r" style="left:1415px;top:828px;width:2px;height:33px;background:#e1e2e2;"></div>
<div class="r" style="left:1582px;top:828px;width:2px;height:33px;background:#dcdddd;"></div>
<div class="r" style="left:112px;top:861px;width:1471px;height:1px;background:#d9dee2;"></div>
<div class="r" style="left:36px;top:861px;width:75px;height:1px;background:#c4c4c4;"></div>
<div class="t " style="left:63.44px;top:836.18px;font-size:17.5px;font-weight:normal;color:#444;">10</div>
<div class="r" style="left:112px;top:862px;width:1471px;height:59px;background:#404e5c;"></div>
<div class="r" style="left:277px;top:862px;width:2px;height:59px;background:#37444f;"></div>
<div class="r" style="left:784px;top:862px;width:2px;height:59px;background:#37444f;"></div>
<div class="r" style="left:893px;top:862px;width:2px;height:59px;background:#37444f;"></div>
<div class="r" style="left:999px;top:862px;width:2px;height:59px;background:#37444f;"></div>
<div class="r" style="left:1082px;top:862px;width:1px;height:59px;background:#37444f;"></div>
<div class="r" style="left:1248px;top:862px;width:2px;height:59px;background:#37444f;"></div>
<div class="r" style="left:1415px;top:862px;width:2px;height:59px;background:#37444f;"></div>
<div class="r" style="left:1582px;top:862px;width:2px;height:59px;background:#e3e6ea;"></div>
<div class="r" style="left:112px;top:921px;width:1471px;height:1px;background:#d5d9dd;"></div>
<div class="r" style="left:36px;top:921px;width:75px;height:1px;background:#c4c4c4;"></div>
<div class="t " style="left:63.53px;top:883.18px;font-size:17.5px;font-weight:normal;color:#444;">11</div>
<div class="t " style="left:116.55px;top:880.00px;font-size:21.5px;font-weight:bold;color:#fff;transform:scaleX(0.9213);">11-00</div>
<div class="t " style="left:283.77px;top:880.00px;font-size:21.5px;font-weight:bold;color:#fff;transform:scaleX(0.8582);">STORY &amp; RIGHTS</div>
<div class="t " style="left:794.80px;top:880.20px;font-size:21.5px;font-weight:bold;color:#fff;transform:scaleX(0.9372);">AMOUNT</div>
<div class="t " style="left:923.27px;top:880.20px;font-size:21.5px;font-weight:bold;color:#fff;transform:scaleX(0.9561);">UNIT</div>
<div class="t " style="left:1034.83px;top:880.20px;font-size:21.5px;font-weight:bold;color:#fff;transform:scaleX(0.8881);">X</div>
<div class="t " style="left:1141.30px;top:880.20px;font-size:21.5px;font-weight:bold;color:#fff;transform:scaleX(0.8320);">RATE</div>
<div class="t " style="left:1314.20px;top:880.20px;font-size:21.5px;font-weight:bold;color:#fff;transform:scaleX(0.8425);">TAB</div>
<div class="t " style="left:1468.69px;top:880.20px;font-size:21.5px;font-weight:bold;color:#fff;transform:scaleX(0.8566);">TOTAL</div>
<div class="r" style="left:112px;top:922px;width:1471px;height:58px;background:#fefefe;"></div>
<div class="r" style="left:277px;top:922px;width:2px;height:58px;background:#e1e2e2;"></div>
<div class="r" style="left:784px;top:922px;width:2px;height:58px;background:#e1e2e2;"></div>
<div class="r" style="left:893px;top:922px;width:2px;height:58px;background:#e1e2e2;"></div>
<div class="r" style="left:999px;top:922px;width:2px;height:58px;background:#e1e2e2;"></div>
<div class="r" style="left:1082px;top:922px;width:1px;height:58px;background:#e1e2e2;"></div>
<div class="r" style="left:1248px;top:922px;width:2px;height:58px;background:#e1e2e2;"></div>
<div class="r" style="left:1415px;top:922px;width:2px;height:58px;background:#e1e2e2;"></div>
<div class="r" style="left:1582px;top:922px;width:2px;height:58px;background:#dcdddd;"></div>
<div class="r" style="left:112px;top:980px;width:1471px;height:1px;background:#d9dee2;"></div>
<div class="r" style="left:36px;top:980px;width:75px;height:1px;background:#c4c4c4;"></div>
<div class="t " style="left:63.54px;top:942.68px;font-size:17.5px;font-weight:normal;color:#444;">12</div>
<div class="t " style="left:116.16px;top:938.33px;font-size:23px;font-weight:normal;color:#1c1c1c;transform:scaleX(0.9365);">11-01</div>
<div class="t " style="left:284.20px;top:938.33px;font-size:23px;font-weight:normal;color:#1c1c1c;transform:scaleX(0.9946);">Writers</div>
<svg class="r" style="left:1036.5px;top:941.4px" width="8" height="17" viewBox="0 0 8 17"><path d="M5.2 1.3 V16.4" stroke="#1c1c1c" stroke-width="2.1" fill="none"/><path d="M5.0 1.9 L1.0 4.9" stroke="#1c1c1c" stroke-width="1.9" fill="none" stroke-linecap="round"/><path d="M4.15 1.2 H6.25 V3 H4.15Z" fill="#1c1c1c"/></svg>
<svg class="r" style="left:1328.3px;top:941.4px" width="8" height="17" viewBox="0 0 8 17"><path d="M5.2 1.3 V16.4" stroke="#1c1c1c" stroke-width="2.1" fill="none"/><path d="M5.0 1.9 L1.0 4.9" stroke="#1c1c1c" stroke-width="1.9" fill="none" stroke-linecap="round"/><path d="M4.15 1.2 H6.25 V3 H4.15Z" fill="#1c1c1c"/></svg>
<div class="t " style="left:1487.87px;top:938.33px;font-size:23px;font-weight:normal;color:#1c1c1c;transform:scaleX(0.9330);">$0</div>
<div class="r" style="left:112px;top:981px;width:1471px;height:58px;background:#fefefe;"></div>
<div class="r" style="left:277px;top:981px;width:2px;height:58px;background:#e1e2e2;"></div>
<div class="r" style="left:784px;top:981px;width:2px;height:58px;background:#e1e2e2;"></div>
<div class="r" style="left:893px;top:981px;width:2px;height:58px;background:#e1e2e2;"></div>
<div class="r" style="left:999px;top:981px;width:2px;height:58px;background:#e1e2e2;"></div>
<div class="r" style="left:1082px;top:981px;width:1px;height:58px;background:#e1e2e2;"></div>
<div class="r" style="left:1248px;top:981px;width:2px;height:58px;background:#e1e2e2;"></div>
<div class="r" style="left:1415px;top:981px;width:2px;height:58px;background:#e1e2e2;"></div>
<div class="r" style="left:1582px;top:981px;width:2px;height:58px;background:#dcdddd;"></div>
<div class="r" style="left:112px;top:1039px;width:1471px;height:1px;background:#d9dee2;"></div>
<div class="r" style="left:36px;top:1039px;width:75px;height:1px;background:#c4c4c4;"></div>
<div class="t " style="left:63.49px;top:1001.68px;font-size:17.5px;font-weight:normal;color:#444;">13</div>
<div class="t " style="left:116.10px;top:997.73px;font-size:23px;font-weight:normal;color:#1c1c1c;transform:scaleX(0.9693);">11-02</div>
<div class="t " style="left:283.30px;top:997.73px;font-size:23px;font-weight:normal;color:#1c1c1c;transform:scaleX(0.9621);">Script Purchase</div>
<svg class="r" style="left:1036.5px;top:1000.8px" width="8" height="17" viewBox="0 0 8 17"><path d="M5.2 1.3 V16.4" stroke="#1c1c1c" stroke-width="2.1" fill="none"/><path d="M5.0 1.9 L1.0 4.9" stroke="#1c1c1c" stroke-width="1.9" fill="none" stroke-linecap="round"/><path d="M4.15 1.2 H6.25 V3 H4.15Z" fill="#1c1c1c"/></svg>
<svg class="r" style="left:1328.3px;top:1000.8px" width="8" height="17" viewBox="0 0 8 17"><path d="M5.2 1.3 V16.4" stroke="#1c1c1c" stroke-width="2.1" fill="none"/><path d="M5.0 1.9 L1.0 4.9" stroke="#1c1c1c" stroke-width="1.9" fill="none" stroke-linecap="round"/><path d="M4.15 1.2 H6.25 V3 H4.15Z" fill="#1c1c1c"/></svg>
<div class="t " style="left:1487.87px;top:997.73px;font-size:23px;font-weight:normal;color:#1c1c1c;transform:scaleX(0.9330);">$0</div>
<div class="r" style="left:112px;top:1040px;width:1471px;height:59px;background:#fefefe;"></div>
<div class="r" style="left:277px;top:1040px;width:2px;height:59px;background:#e1e2e2;"></div>
<div class="r" style="left:784px;top:1040px;width:2px;height:59px;background:#e1e2e2;"></div>
<div class="r" style="left:893px;top:1040px;width:2px;height:59px;background:#e1e2e2;"></div>
<div class="r" style="left:999px;top:1040px;width:2px;height:59px;background:#e1e2e2;"></div>
<div class="r" style="left:1082px;top:1040px;width:1px;height:59px;background:#e1e2e2;"></div>
<div class="r" style="left:1248px;top:1040px;width:2px;height:59px;background:#e1e2e2;"></div>
<div class="r" style="left:1415px;top:1040px;width:2px;height:59px;background:#e1e2e2;"></div>
<div class="r" style="left:1582px;top:1040px;width:2px;height:59px;background:#dcdddd;"></div>
<div class="r" style="left:112px;top:1099px;width:1471px;height:1px;background:#d9dee2;"></div>
<div class="r" style="left:36px;top:1099px;width:75px;height:1px;background:#c4c4c4;"></div>
<div class="t " style="left:63.36px;top:1061.18px;font-size:17.5px;font-weight:normal;color:#444;">14</div>
<div class="t " style="left:116.11px;top:1057.13px;font-size:23px;font-weight:normal;color:#1c1c1c;transform:scaleX(0.9668);">11-03</div>
<div class="t " style="left:283.30px;top:1057.13px;font-size:23px;font-weight:normal;color:#1c1c1c;transform:scaleX(0.9555);">Script Copies</div>
<svg class="r" style="left:1036.5px;top:1060.2px" width="8" height="17" viewBox="0 0 8 17"><path d="M5.2 1.3 V16.4" stroke="#1c1c1c" stroke-width="2.1" fill="none"/><path d="M5.0 1.9 L1.0 4.9" stroke="#1c1c1c" stroke-width="1.9" fill="none" stroke-linecap="round"/><path d="M4.15 1.2 H6.25 V3 H4.15Z" fill="#1c1c1c"/></svg>
<svg class="r" style="left:1328.3px;top:1060.2px" width="8" height="17" viewBox="0 0 8 17"><path d="M5.2 1.3 V16.4" stroke="#1c1c1c" stroke-width="2.1" fill="none"/><path d="M5.0 1.9 L1.0 4.9" stroke="#1c1c1c" stroke-width="1.9" fill="none" stroke-linecap="round"/><path d="M4.15 1.2 H6.25 V3 H4.15Z" fill="#1c1c1c"/></svg>
<div class="t " style="left:1487.87px;top:1057.13px;font-size:23px;font-weight:normal;color:#1c1c1c;transform:scaleX(0.9330);">$0</div>
<div class="r" style="left:112px;top:1100px;width:1471px;height:58px;background:#fefefe;"></div>
<div class="r" style="left:277px;top:1100px;width:2px;height:58px;background:#e1e2e2;"></div>
<div class="r" style="left:784px;top:1100px;width:2px;height:58px;background:#e1e2e2;"></div>
<div class="r" style="left:893px;top:1100px;width:2px;height:58px;background:#e1e2e2;"></div>
<div class="r" style="left:999px;top:1100px;width:2px;height:58px;background:#e1e2e2;"></div>
<div class="r" style="left:1082px;top:1100px;width:1px;height:58px;background:#e1e2e2;"></div>
<div class="r" style="left:1248px;top:1100px;width:2px;height:58px;background:#e1e2e2;"></div>
<div class="r" style="left:1415px;top:1100px;width:2px;height:58px;background:#e1e2e2;"></div>
<div class="r" style="left:1582px;top:1100px;width:2px;height:58px;background:#dcdddd;"></div>
<div class="r" style="left:112px;top:1158px;width:1471px;height:1px;background:#d9dee2;"></div>
<div class="r" style="left:36px;top:1158px;width:75px;height:1px;background:#c4c4c4;"></div>
<div class="t " style="left:63.47px;top:1120.68px;font-size:17.5px;font-weight:normal;color:#444;">15</div>
<div class="t " style="left:116.10px;top:1116.43px;font-size:23px;font-weight:normal;color:#1c1c1c;transform:scaleX(0.9716);">11-04</div>
<div class="t " style="left:283.28px;top:1116.43px;font-size:23px;font-weight:normal;color:#1c1c1c;transform:scaleX(0.9790);">Script Timing</div>
<svg class="r" style="left:1036.5px;top:1119.5px" width="8" height="17" viewBox="0 0 8 17"><path d="M5.2 1.3 V16.4" stroke="#1c1c1c" stroke-width="2.1" fill="none"/><path d="M5.0 1.9 L1.0 4.9" stroke="#1c1c1c" stroke-width="1.9" fill="none" stroke-linecap="round"/><path d="M4.15 1.2 H6.25 V3 H4.15Z" fill="#1c1c1c"/></svg>
<svg class="r" style="left:1328.3px;top:1119.5px" width="8" height="17" viewBox="0 0 8 17"><path d="M5.2 1.3 V16.4" stroke="#1c1c1c" stroke-width="2.1" fill="none"/><path d="M5.0 1.9 L1.0 4.9" stroke="#1c1c1c" stroke-width="1.9" fill="none" stroke-linecap="round"/><path d="M4.15 1.2 H6.25 V3 H4.15Z" fill="#1c1c1c"/></svg>
<div class="t " style="left:1487.87px;top:1116.43px;font-size:23px;font-weight:normal;color:#1c1c1c;transform:scaleX(0.9330);">$0</div>
<div class="r" style="left:112px;top:1159px;width:1471px;height:59px;background:#fefefe;"></div>
<div class="r" style="left:277px;top:1159px;width:2px;height:59px;background:#e1e2e2;"></div>
<div class="r" style="left:784px;top:1159px;width:2px;height:59px;background:#e1e2e2;"></div>
<div class="r" style="left:893px;top:1159px;width:2px;height:59px;background:#e1e2e2;"></div>
<div class="r" style="left:999px;top:1159px;width:2px;height:59px;background:#e1e2e2;"></div>
<div class="r" style="left:1082px;top:1159px;width:1px;height:59px;background:#e1e2e2;"></div>
<div class="r" style="left:1248px;top:1159px;width:2px;height:59px;background:#e1e2e2;"></div>
<div class="r" style="left:1415px;top:1159px;width:2px;height:59px;background:#e1e2e2;"></div>
<div class="r" style="left:1582px;top:1159px;width:2px;height:59px;background:#dcdddd;"></div>
<div class="r" style="left:112px;top:1218px;width:1471px;height:1px;background:#d9dee2;"></div>
<div class="r" style="left:36px;top:1218px;width:75px;height:1px;background:#c4c4c4;"></div>
<div class="t " style="left:63.49px;top:1180.18px;font-size:17.5px;font-weight:normal;color:#444;">16</div>
<div class="t " style="left:116.12px;top:1175.93px;font-size:23px;font-weight:normal;color:#1c1c1c;transform:scaleX(0.9571);">11-05</div>
<div class="t " style="left:283.30px;top:1175.93px;font-size:23px;font-weight:normal;color:#1c1c1c;transform:scaleX(0.9581);">Script Clearance Report</div>
<svg class="r" style="left:1036.5px;top:1179.0px" width="8" height="17" viewBox="0 0 8 17"><path d="M5.2 1.3 V16.4" stroke="#1c1c1c" stroke-width="2.1" fill="none"/><path d="M5.0 1.9 L1.0 4.9" stroke="#1c1c1c" stroke-width="1.9" fill="none" stroke-linecap="round"/><path d="M4.15 1.2 H6.25 V3 H4.15Z" fill="#1c1c1c"/></svg>
<svg class="r" style="left:1328.3px;top:1179.0px" width="8" height="17" viewBox="0 0 8 17"><path d="M5.2 1.3 V16.4" stroke="#1c1c1c" stroke-width="2.1" fill="none"/><path d="M5.0 1.9 L1.0 4.9" stroke="#1c1c1c" stroke-width="1.9" fill="none" stroke-linecap="round"/><path d="M4.15 1.2 H6.25 V3 H4.15Z" fill="#1c1c1c"/></svg>
<div class="t " style="left:1487.87px;top:1175.93px;font-size:23px;font-weight:normal;color:#1c1c1c;transform:scaleX(0.9330);">$0</div>
<div class="r" style="left:112px;top:1219px;width:1471px;height:58px;background:#e9ecef;"></div>
<div class="r" style="left:277px;top:1219px;width:2px;height:58px;background:#d9dde1;"></div>
<div class="r" style="left:784px;top:1219px;width:2px;height:58px;background:#d9dde1;"></div>
<div class="r" style="left:893px;top:1219px;width:2px;height:58px;background:#d9dde1;"></div>
<div class="r" style="left:999px;top:1219px;width:2px;height:58px;background:#d9dde1;"></div>
<div class="r" style="left:1082px;top:1219px;width:1px;height:58px;background:#d9dde1;"></div>
<div class="r" style="left:1248px;top:1219px;width:2px;height:58px;background:#d9dde1;"></div>
<div class="r" style="left:1415px;top:1219px;width:2px;height:58px;background:#d9dde1;"></div>
<div class="r" style="left:1582px;top:1219px;width:2px;height:58px;background:#d9dde1;"></div>
<div class="r" style="left:112px;top:1277px;width:1471px;height:1px;background:#d9dee2;"></div>
<div class="r" style="left:36px;top:1277px;width:75px;height:1px;background:#c4c4c4;"></div>
<div class="t " style="left:63.54px;top:1239.68px;font-size:17.5px;font-weight:normal;color:#444;">17</div>
<div class="t " style="left:116.41px;top:1235.48px;font-size:22.7px;font-weight:bold;color:#222a33;transform:scaleX(0.9749);">11-00</div>
<div class="t " style="left:283.64px;top:1235.48px;font-size:22.7px;font-weight:bold;color:#222a33;transform:scaleX(1.0087);">Subtotal</div>
<div class="t " style="left:1487.56px;top:1235.48px;font-size:22.7px;font-weight:bold;color:#222a33;transform:scaleX(0.9701);">$0</div>
<div class="r" style="left:112px;top:1278px;width:1471px;height:34px;background:#fefefe;"></div>
<div class="r" style="left:277px;top:1278px;width:2px;height:34px;background:#e1e2e2;"></div>
<div class="r" style="left:784px;top:1278px;width:2px;height:34px;background:#e1e2e2;"></div>
<div class="r" style="left:893px;top:1278px;width:2px;height:34px;background:#e1e2e2;"></div>
<div class="r" style="left:999px;top:1278px;width:2px;height:34px;background:#e1e2e2;"></div>
<div class="r" style="left:1082px;top:1278px;width:1px;height:34px;background:#e1e2e2;"></div>
<div class="r" style="left:1248px;top:1278px;width:2px;height:34px;background:#e1e2e2;"></div>
<div class="r" style="left:1415px;top:1278px;width:2px;height:34px;background:#e1e2e2;"></div>
<div class="r" style="left:1582px;top:1278px;width:2px;height:34px;background:#dcdddd;"></div>
<div class="r" style="left:112px;top:1312px;width:1471px;height:1px;background:#d9dee2;"></div>
<div class="r" style="left:36px;top:1312px;width:75px;height:1px;background:#c4c4c4;"></div>
<div class="t " style="left:63.48px;top:1286.68px;font-size:17.5px;font-weight:normal;color:#444;">18</div>
<div class="r" style="left:112px;top:1313px;width:1471px;height:58px;background:#404e5c;"></div>
<div class="r" style="left:277px;top:1313px;width:2px;height:58px;background:#37444f;"></div>
<div class="r" style="left:784px;top:1313px;width:2px;height:58px;background:#37444f;"></div>
<div class="r" style="left:893px;top:1313px;width:2px;height:58px;background:#37444f;"></div>
<div class="r" style="left:999px;top:1313px;width:2px;height:58px;background:#37444f;"></div>
<div class="r" style="left:1082px;top:1313px;width:1px;height:58px;background:#37444f;"></div>
<div class="r" style="left:1248px;top:1313px;width:2px;height:58px;background:#37444f;"></div>
<div class="r" style="left:1415px;top:1313px;width:2px;height:58px;background:#37444f;"></div>
<div class="r" style="left:1582px;top:1313px;width:2px;height:58px;background:#e3e6ea;"></div>
<div class="r" style="left:112px;top:1371px;width:1471px;height:1px;background:#d5d9dd;"></div>
<div class="r" style="left:36px;top:1371px;width:75px;height:1px;background:#c4c4c4;"></div>
<div class="t " style="left:63.52px;top:1333.68px;font-size:17.5px;font-weight:normal;color:#444;">19</div>
<div class="t " style="left:116.41px;top:1329.90px;font-size:23.5px;font-weight:bold;color:#fff;transform:scaleX(0.9417);">12-00</div>
<div class="t " style="left:282.90px;top:1331.60px;font-size:21.5px;font-weight:bold;color:#fff;transform:scaleX(0.9716);">PRODUCERS UNIT</div>
<div class="t " style="left:794.80px;top:1330.20px;font-size:21.5px;font-weight:bold;color:#fff;transform:scaleX(0.9372);">AMOUNT</div>
<div class="t " style="left:923.27px;top:1330.20px;font-size:21.5px;font-weight:bold;color:#fff;transform:scaleX(0.9561);">UNIT</div>
<div class="t " style="left:1034.83px;top:1330.20px;font-size:21.5px;font-weight:bold;color:#fff;transform:scaleX(0.8881);">X</div>
<div class="t " style="left:1141.30px;top:1330.20px;font-size:21.5px;font-weight:bold;color:#fff;transform:scaleX(0.8320);">RATE</div>
<div class="t " style="left:1314.20px;top:1330.20px;font-size:21.5px;font-weight:bold;color:#fff;transform:scaleX(0.8425);">TAB</div>
<div class="t " style="left:1468.69px;top:1330.20px;font-size:21.5px;font-weight:bold;color:#fff;transform:scaleX(0.8566);">TOTAL</div>
<div class="r" style="left:112px;top:1372px;width:1471px;height:58px;background:#fefefe;"></div>
<div class="r" style="left:277px;top:1372px;width:2px;height:58px;background:#e1e2e2;"></div>
<div class="r" style="left:784px;top:1372px;width:2px;height:58px;background:#e1e2e2;"></div>
<div class="r" style="left:893px;top:1372px;width:2px;height:58px;background:#e1e2e2;"></div>
<div class="r" style="left:999px;top:1372px;width:2px;height:58px;background:#e1e2e2;"></div>
<div class="r" style="left:1082px;top:1372px;width:1px;height:58px;background:#e1e2e2;"></div>
<div class="r" style="left:1248px;top:1372px;width:2px;height:58px;background:#e1e2e2;"></div>
<div class="r" style="left:1415px;top:1372px;width:2px;height:58px;background:#e1e2e2;"></div>
<div class="r" style="left:1582px;top:1372px;width:2px;height:58px;background:#dcdddd;"></div>
<div class="r" style="left:112px;top:1430px;width:1471px;height:1px;background:#d9dee2;"></div>
<div class="r" style="left:36px;top:1430px;width:75px;height:1px;background:#c4c4c4;"></div>
<div class="t " style="left:63.67px;top:1392.68px;font-size:17.5px;font-weight:normal;color:#444;">20</div>
<div class="t " style="left:116.16px;top:1388.83px;font-size:23px;font-weight:normal;color:#1c1c1c;transform:scaleX(0.9365);">12-01</div>
<div class="t " style="left:282.42px;top:1388.83px;font-size:23px;font-weight:normal;color:#1c1c1c;transform:scaleX(0.9972);">Producer</div>
<svg class="r" style="left:1036.5px;top:1391.9px" width="8" height="17" viewBox="0 0 8 17"><path d="M5.2 1.3 V16.4" stroke="#1c1c1c" stroke-width="2.1" fill="none"/><path d="M5.0 1.9 L1.0 4.9" stroke="#1c1c1c" stroke-width="1.9" fill="none" stroke-linecap="round"/><path d="M4.15 1.2 H6.25 V3 H4.15Z" fill="#1c1c1c"/></svg>
<svg class="r" style="left:1328.3px;top:1391.9px" width="8" height="17" viewBox="0 0 8 17"><path d="M5.2 1.3 V16.4" stroke="#1c1c1c" stroke-width="2.1" fill="none"/><path d="M5.0 1.9 L1.0 4.9" stroke="#1c1c1c" stroke-width="1.9" fill="none" stroke-linecap="round"/><path d="M4.15 1.2 H6.25 V3 H4.15Z" fill="#1c1c1c"/></svg>
<div class="t " style="left:1487.87px;top:1388.83px;font-size:23px;font-weight:normal;color:#1c1c1c;transform:scaleX(0.9330);">$0</div>
<div class="r" style="left:112px;top:1431px;width:1471px;height:59px;background:#fefefe;"></div>
<div class="r" style="left:277px;top:1431px;width:2px;height:59px;background:#e1e2e2;"></div>
<div class="r" style="left:784px;top:1431px;width:2px;height:59px;background:#e1e2e2;"></div>
<div class="r" style="left:893px;top:1431px;width:2px;height:59px;background:#e1e2e2;"></div>
<div class="r" style="left:999px;top:1431px;width:2px;height:59px;background:#e1e2e2;"></div>
<div class="r" style="left:1082px;top:1431px;width:1px;height:59px;background:#e1e2e2;"></div>
<div class="r" style="left:1248px;top:1431px;width:2px;height:59px;background:#e1e2e2;"></div>
<div class="r" style="left:1415px;top:1431px;width:2px;height:59px;background:#e1e2e2;"></div>
<div class="r" style="left:1582px;top:1431px;width:2px;height:59px;background:#dcdddd;"></div>
<div class="r" style="left:112px;top:1490px;width:1471px;height:1px;background:#d9dee2;"></div>
<div class="r" style="left:36px;top:1490px;width:75px;height:1px;background:#c4c4c4;"></div>
<div class="t " style="left:63.75px;top:1452.18px;font-size:17.5px;font-weight:normal;color:#444;">21</div>
<div class="t " style="left:116.10px;top:1448.13px;font-size:23px;font-weight:normal;color:#1c1c1c;transform:scaleX(0.9693);">12-02</div>
<div class="t " style="left:283.17px;top:1448.13px;font-size:23px;font-weight:normal;color:#1c1c1c;transform:scaleX(0.9656);">Co-Producer</div>
<svg class="r" style="left:1036.5px;top:1451.2px" width="8" height="17" viewBox="0 0 8 17"><path d="M5.2 1.3 V16.4" stroke="#1c1c1c" stroke-width="2.1" fill="none"/><path d="M5.0 1.9 L1.0 4.9" stroke="#1c1c1c" stroke-width="1.9" fill="none" stroke-linecap="round"/><path d="M4.15 1.2 H6.25 V3 H4.15Z" fill="#1c1c1c"/></svg>
<svg class="r" style="left:1328.3px;top:1451.2px" width="8" height="17" viewBox="0 0 8 17"><path d="M5.2 1.3 V16.4" stroke="#1c1c1c" stroke-width="2.1" fill="none"/><path d="M5.0 1.9 L1.0 4.9" stroke="#1c1c1c" stroke-width="1.9" fill="none" stroke-linecap="round"/><path d="M4.15 1.2 H6.25 V3 H4.15Z" fill="#1c1c1c"/></svg>
<div class="t " style="left:1487.87px;top:1448.13px;font-size:23px;font-weight:normal;color:#1c1c1c;transform:scaleX(0.9330);">$0</div>
<div class="t " style="left:68.39px;top:287.68px;font-size:17.5px;font-weight:normal;color:#444;">1</div>
<div class="t " style="left:284.34px;top:278.21px;font-size:34px;font-weight:normal;color:#fff;transform:scaleX(0.8845);">ABOVE THE LINE</div>
<svg class="r" style="left:1460px;top:262px" width="80" height="64" viewBox="0 0 80 64"><path d="M18.8 22 Q18.5 17.5 24 16.8 L51.5 13.2 Q58.5 12.6 59.2 20 L60 35 Q60.2 43 52 43.3 L42.5 43.8 L37.2 54.2 L32.2 44.6 L27 44.8 Q19.8 45 19.2 38Z" fill="none" stroke="#fff" stroke-width="2.7" stroke-linejoin="round"/><path d="M23.8 24.8 Q44 23 53.5 19 M24.2 30.4 Q45 29.8 54.5 26.4 M25.4 37.4 Q45 36.8 55 34.2" fill="none" stroke="#fff" stroke-width="2.7" stroke-linecap="round"/></svg>
<div class="r" style="left:112px;top:1491px;width:1471px;height:4px;background:#fefefe;"></div>
<div class="r" style="left:277px;top:1491px;width:2px;height:4px;background:#e1e2e2;"></div>
<div class="r" style="left:784px;top:1491px;width:2px;height:4px;background:#e1e2e2;"></div>
<div class="r" style="left:893px;top:1491px;width:2px;height:4px;background:#e1e2e2;"></div>
<div class="r" style="left:999px;top:1491px;width:2px;height:4px;background:#e1e2e2;"></div>
<div class="r" style="left:1082px;top:1491px;width:1px;height:4px;background:#e1e2e2;"></div>
<div class="r" style="left:1248px;top:1491px;width:2px;height:4px;background:#e1e2e2;"></div>
<div class="r" style="left:1415px;top:1491px;width:2px;height:4px;background:#e1e2e2;"></div>
<div class="r" style="left:1582px;top:1491px;width:2px;height:4px;background:#e1e2e2;"></div>
<div class="r" style="left:36px;top:1491px;width:75px;height:4px;background:#f3f3f3;"></div>
<div class="r" style="left:36px;top:1495px;width:2412px;height:1px;background:#dcdcdc;"></div>
<div class="r" style="left:2448px;top:207px;width:19px;height:1289px;background:#f7f8f9;"></div>
<div class="r" style="left:2448px;top:207px;width:1px;height:1289px;background:#dadada;"></div>
<div class="r" style="left:2448px;top:345px;width:19px;height:8px;background:#dfe3ea;"></div>
<div class="r" style="left:2450px;top:355px;width:16px;height:366px;background:#c6c6c6;"></div>
<div class="r" style="left:2449px;top:1444px;width:18px;height:1px;background:#dadada;"></div>
<div class="r" style="left:2449px;top:1470px;width:18px;height:1px;background:#dadada;"></div>
<svg class="r" style="left:2453px;top:1453px" width="10" height="6" viewBox="0 0 10 6"><path d="M0 6 L5 0 L10 6Z" fill="#8f8f8f"/></svg>
<svg class="r" style="left:2453px;top:1479px" width="10" height="6" viewBox="0 0 10 6"><path d="M0 0 L5 6 L10 0Z" fill="#8f8f8f"/></svg>
<div class="r" style="left:36px;top:1496px;width:2412px;height:19px;background:#f5f6f7;"></div>
<div class="r" style="left:110px;top:1496px;width:2px;height:19px;background:#dde1e6;"></div>
<div class="r" style="left:2397px;top:1496px;width:1px;height:19px;background:#dadada;"></div>
<div class="r" style="left:2422px;top:1496px;width:1px;height:19px;background:#dadada;"></div>
<div class="r" style="left:2448px;top:1496px;width:19px;height:19px;background:#f7f8f9;"></div>
<div class="r" style="left:2448px;top:1496px;width:1px;height:19px;background:#dadada;"></div>
<div class="r" style="left:36px;top:1495px;width:2431px;height:1px;background:#dcdcdc;"></div>
<svg class="r" style="left:2406px;top:1501px" width="6" height="10" viewBox="0 0 6 10"><path d="M6 0 L0 5 L6 10Z" fill="#8f8f8f"/></svg>
<svg class="r" style="left:2432px;top:1501px" width="6" height="10" viewBox="0 0 6 10"><path d="M0 0 L6 5 L0 10Z" fill="#8f8f8f"/></svg>
<div class="r" style="left:36px;top:1515px;width:2260px;height:62px;background:#ececec;"></div>
<div class="r" style="left:36px;top:1515px;width:2431px;height:1px;background:#a8a8a8;"></div>
<svg class="r" style="left:119px;top:1535px" width="17" height="17" viewBox="0 0 17 17"><rect x="7" y="0" width="3" height="17" fill="#666"/><rect x="0" y="7" width="17" height="3" fill="#666"/></svg>
<svg class="r" style="left:169px;top:1535px" width="20" height="18" viewBox="0 0 20 18"><rect x="0" y="0" width="20" height="3" fill="#666"/><rect x="0" y="5" width="20" height="3" fill="#666"/><rect x="0" y="10" width="20" height="3" fill="#666"/><rect x="0" y="15" width="20" height="3" fill="#666"/></svg>
<div class="r" style="left:226px;top:1516px;width:154px;height:47px;background:#e3e6e9;border:1px solid #cfd2d5;border-top:none;border-radius:0 0 3px 3px;box-sizing:border-box;box-shadow:0 1px 1px rgba(0,0,0,0.15)"></div>
<div class="t " style="left:239.51px;top:1526.53px;font-size:23px;font-weight:normal;color:#6f6f6f;transform:scaleX(0.9579);">Top Sheet</div>
<svg class="r" style="left:356px;top:1536px" width="10" height="5" viewBox="0 0 10 5"><path d="M0 0 H10 L5 5Z" fill="#9a9a9a"/></svg>
<div class="r" style="left:381px;top:1515px;width:235px;height:47px;background:#fff;border:1px solid #c9c9c9;border-top:none;border-radius:0 0 3px 3px;box-sizing:border-box;box-shadow:0 1px 1px rgba(0,0,0,0.18)"></div>
<div class="t " style="left:392.25px;top:1524.10px;font-size:23.5px;font-weight:normal;color:#222;transform:scaleX(0.9792);-webkit-text-stroke:0.7px #222">1 - Above the Line</div>
<svg class="r" style="left:592px;top:1535px" width="10" height="5" viewBox="0 0 10 5"><path d="M0 0 H10 L5 5Z" fill="#8a8a8a"/></svg>
<div class="r" style="left:618px;top:1516px;width:298px;height:47px;background:#e3e6e9;border:1px solid #cfd2d5;border-top:none;border-radius:0 0 3px 3px;box-sizing:border-box;box-shadow:0 1px 1px rgba(0,0,0,0.15)"></div>
<div class="t " style="left:629.45px;top:1526.53px;font-size:23px;font-weight:normal;color:#6f6f6f;transform:scaleX(0.9912);">2 - Production Expenses</div>
<svg class="r" style="left:892px;top:1536px" width="10" height="5" viewBox="0 0 10 5"><path d="M0 0 H10 L5 5Z" fill="#9a9a9a"/></svg>
<div class="r" style="left:917px;top:1516px;width:350px;height:47px;background:#e3e6e9;border:1px solid #cfd2d5;border-top:none;border-radius:0 0 3px 3px;box-sizing:border-box;box-shadow:0 1px 1px rgba(0,0,0,0.15)"></div>
<div class="t " style="left:928.53px;top:1526.53px;font-size:23px;font-weight:normal;color:#6f6f6f;transform:scaleX(0.9915);">3 - Post-Production Expenses</div>
<svg class="r" style="left:1243px;top:1536px" width="10" height="5" viewBox="0 0 10 5"><path d="M0 0 H10 L5 5Z" fill="#9a9a9a"/></svg>
<div class="r" style="left:1269px;top:1516px;width:241px;height:47px;background:#e3e6e9;border:1px solid #cfd2d5;border-top:none;border-radius:0 0 3px 3px;box-sizing:border-box;box-shadow:0 1px 1px rgba(0,0,0,0.15)"></div>
<div class="t " style="left:1281.49px;top:1526.53px;font-size:23px;font-weight:normal;color:#6f6f6f;transform:scaleX(0.9675);">4 - Other Expenses</div>
<svg class="r" style="left:1486px;top:1536px" width="10" height="5" viewBox="0 0 10 5"><path d="M0 0 H10 L5 5Z" fill="#9a9a9a"/></svg>
<div class="r" style="left:2296px;top:1516px;width:171px;height:61px;background:#fff;"></div>
<div class="r" style="left:2296px;top:1516px;width:1px;height:61px;background:#c8c8c8;"></div>
<svg class="r" style="left:2315px;top:1531px" width="31" height="34" viewBox="0 0 31 34"><path d="M2 0 H29 Q31 0 31 2 V26 Q31 28 29 28 H19 L15.5 33.5 L12 28 H2 Q0 28 0 26 V2 Q0 0 2 0Z" fill="#17a05d"/><path d="M15.5 4.5 Q17 12.5 25 14 Q17 15.5 15.5 23.5 Q14 15.5 6 14 Q14 12.5 15.5 4.5Z" fill="#fff"/></svg>
<div class="t " style="left:2367.39px;top:1537.92px;font-size:21px;font-weight:normal;color:#0f9d58;transform:scaleX(0.9337);">Explore</div>
<div class="r" style="left:36px;top:1577px;width:2431px;height:1px;background:#e6e6e6;"></div>
<div class="r" style="left:2467px;top:106px;width:1px;height:1471px;background:#dcdcdc;"></div>
<div class="r" style="left:2468px;top:106px;width:92px;height:1471px;background:#fdfdfd;"></div>
<svg class="r" style="left:2503px;top:140px" width="24" height="26" viewBox="0 0 24 26"><rect x="0.5" y="1.5" width="23" height="24" rx="2" fill="#4285f4"/><rect x="0.5" y="0" width="23" height="4" rx="1.5" fill="#bdbdbd"/><rect x="0.5" y="3.5" width="23" height="5" fill="#3367d6"/><text x="12" y="21" font-family="Liberation Sans" font-size="13" fill="#fff" text-anchor="middle">31</text></svg>
<svg class="r" style="left:2503px;top:234px" width="24" height="24" viewBox="0 0 24 24"><path d="M0 2 Q0 0 2 0 H22 Q24 0 24 2 V19 L19 24 H2 Q0 24 0 22Z" fill="#f4b400"/><path d="M24 19 L19 24 V19Z" fill="#f6d27a"/><path d="M9.6 15.2 Q7 12.8 7 9.6 Q7 4.6 12 4.6 Q17 4.6 17 9.6 Q17 12.8 14.4 15.2Z" fill="none" stroke="#fff" stroke-width="1.2"/><rect x="9.8" y="16" width="4.4" height="2.4" fill="#fff"/></svg>
<svg class="r" style="left:2501px;top:324px" width="28" height="28" viewBox="0 0 28 28"><circle cx="14" cy="14" r="14" fill="#4285f4"/><path d="M10 19 L21.5 8" stroke="#fff" stroke-width="3.4" stroke-linecap="round"/><circle cx="6.5" cy="14" r="2.6" fill="#fbbc04"/></svg>
<svg class="r" style="left:2510px;top:1524px" width="11" height="18" viewBox="0 0 11 18"><path d="M1.5 1.5 L9 9 L1.5 16.5" fill="none" stroke="#555" stroke-width="2.8"/></svg>
</body></html>
